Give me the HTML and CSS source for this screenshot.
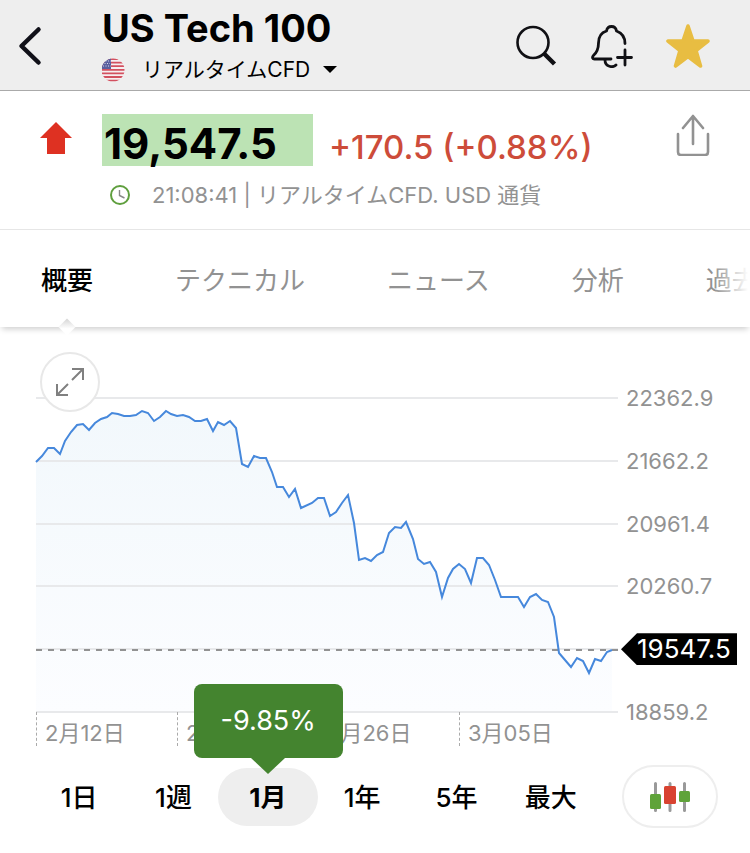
FILE: index.html
```html
<!DOCTYPE html>
<html lang="ja">
<head>
<meta charset="UTF-8">
<meta name="viewport" content="width=device-width, initial-scale=1.0">
<title>US Tech 100</title>
<link rel="stylesheet" href="styles.css">
</head>
<body>
<header class="topbar">
    <button class="icon-btn back" aria-label="戻る">
        <svg width="24" height="40" viewBox="0 0 24 40"><path d="M20.500 3.500 3.500 20 20.500 36.500" fill="none" stroke="#101018" stroke-width="4.500" stroke-linecap="round" stroke-linejoin="round"/></svg>
    </button>
    <div class="heading">
        <h1>US Tech 100</h1>
        <div class="market">
            <svg width="24" height="24" viewBox="0 0 24 24" aria-hidden="true">
                <clipPath id="flag"><circle cx="11" cy="12" r="11.500"/></clipPath>
                <g clip-path="url(#flag)">
                    <path fill="#f6eef0" d="M-1 0h25v24H-1z"/>
                    <path d="M-1 1h25M-1 4.600h25M-1 8.200h25M-1 11.800h25M-1 15.400h25M-1 19h25M-1 22.600h25" stroke="#d2505f" stroke-width="1.800"/>
                    <path fill="#5a5f9e" d="M-1 0h10v11H-1z"/>
                    <path d="M1 3h8M0 5.500h8M1 8h8" stroke="#d5d8ea" stroke-width="1" stroke-dasharray="1 1.500"/>
                </g>
            </svg>
            <select class="market-select" aria-label="市場">
                <option>リアルタイムCFD</option>
            </select>
            <svg width="14" height="8" viewBox="0 0 14 8" aria-hidden="true"><path d="M0 0h14L7 7z"/></svg>
        </div>
    </div>
    <div class="actions">
        <button class="icon-btn" aria-label="検索">
            <svg width="42" height="42" viewBox="0 0 42 42" fill="none" stroke="#101014"><circle cx="17" cy="17.500" r="15.500" stroke-width="2.600"/><path d="m28 28.500 10.500 10.500" stroke-width="4.400"/></svg>
        </button>
        <button class="icon-btn" aria-label="アラートを追加">
            <svg width="42" height="44" viewBox="0 0 42 44" fill="none" stroke="#101014" stroke-width="2.800" stroke-linecap="round" stroke-linejoin="round">
                <path d="M20 35H3.500C1.500 35 1 33.500 2.200 31.800 6 28.500 7.500 25 7.500 19 7.500 12 10.500 8.500 15.500 7 16.500 1 24.500 1 25.500 7 31 9 34 12.500 34 19.500"/>
                <path d="M14 36c0 7 8 8 11 5M34 26v15M26.500 33.500h14"/>
            </svg>
        </button>
        <button class="icon-btn" aria-label="お気に入り">
            <svg width="44" height="46" viewBox="0 0 44 46"><path d="M22 3 27 18H42L30 27.500 34.500 43 22 33.500 9.500 43 14 27.500 2 18H17z" fill="#e8bd42" stroke="#e8bd42" stroke-width="3.600" stroke-linejoin="round"/></svg>
        </button>
    </div>
</header>

<section class="quote">
    <svg class="direction" width="32" height="32" viewBox="0 0 32 32" aria-hidden="true"><path d="M16 0 32 16H25V32H7V16H0z" fill="#de3122"/></svg>
    <div class="quote-body">
        <div class="price-row">
            <strong class="price">19,547.5</strong>
            <span class="change">+170.5 (+0.88%)</span>
        </div>
        <div class="time-row">
            <svg width="20" height="20" viewBox="0 0 20 20" fill="none" aria-hidden="true"><circle cx="10" cy="10" r="9" stroke="#5f9f3e" stroke-width="2"/><path d="M9.500 5v5.500l5 2.500" stroke="#888" stroke-width="1.400"/></svg>
            <span>21:08:41 | リアルタイムCFD. USD 通貨</span>
        </div>
    </div>
    <button class="icon-btn share" aria-label="共有">
        <svg width="34" height="42" viewBox="0 0 34 42" fill="none" stroke="#929292" stroke-width="2.600" stroke-linecap="round" stroke-linejoin="round"><path d="M2 20v18q0 3 3 3h24q3 0 3-3V20M17 30V2M7 14 17 2l10 12"/></svg>
    </button>
</section>

<nav class="tabs">
    <a class="tab active" href="#overview">概要</a>
    <a class="tab" href="#technical">テクニカル</a>
    <a class="tab" href="#news">ニュース</a>
    <a class="tab" href="#analysis">分析</a>
    <a class="tab" href="#history">過去データ</a>
</nav>

<main class="chart" id="overview">
    <div class="plot">
        <svg class="plot-svg" viewBox="0 0 582 314" preserveAspectRatio="none" role="img" aria-label="US Tech 100 1月チャート">
            <defs>
                <linearGradient id="fill" x1="0" y1="0" x2="0" y2="1">
                    <stop offset="0" stop-color="#f2f8fc"/>
                    <stop offset="1" stop-color="#fcfdff"/>
                </linearGradient>
            </defs>
            <path class="area" d=""/>
            <path class="grid-line" d="M0 0H582M0 63H582M0 126H582M0 188H582M0 251H582M0 314H582"/>
            <path class="last-line" d="M0 252H582"/>
            <path class="series" d=""/>
        </svg>
        <div class="dates">
            <span>2月12日</span>
            <span>2月19日</span>
            <span>2月26日</span>
            <span>3月05日</span>
        </div>
    </div>
    <div class="scale">
        <span>22362.9</span>
        <span>21662.2</span>
        <span>20961.4</span>
        <span>20260.7</span>
        <span class="last">19547.5</span>
        <span>18859.2</span>
    </div>
    <button class="expand" aria-label="全画面">
        <svg width="28" height="28" viewBox="0 0 28 28" fill="none" stroke="#808080" stroke-width="2"><path d="M16 1h11v11M27 1 16 12M1 16v11h11M1 27l11-11"/></svg>
    </button>
</main>

<div class="toolbar">
    <div class="ranges">
        <button class="range">1日</button>
        <button class="range">1週</button>
        <button class="range selected">1月<span class="tooltip">-9.85%</span></button>
        <button class="range">1年</button>
        <button class="range">5年</button>
        <button class="range">最大</button>
    </div>
    <button class="chart-type" aria-label="ローソク足">
        <svg width="42" height="30" viewBox="0 0 42 30">
            <path d="M6.500 1.500v27M21 1.500v27M35.500 1.500v27" stroke="#999" stroke-width="3" stroke-linecap="round"/>
            <rect x="1" y="12" width="11" height="15" rx="1.500" fill="#5fa33a"/>
            <rect x="15" y="4" width="12" height="18" rx="1.500" fill="#d84331"/>
            <rect x="30" y="9" width="11" height="11" rx="1.500" fill="#5fa33a"/>
        </svg>
    </button>
</div>

<script src="chart.js"></script>
</body>
</html>
```
FILE: styles.css
```css
* {
    box-sizing: border-box;
}
body {
    margin: 0;
    background: #fff;
    color: #000;
    font-family: Inter, "Noto Sans CJK JP", sans-serif;
    overflow-x: hidden;
}
button {
    padding: 0;
    border: none;
    background: none;
    color: inherit;
    font: inherit;
    cursor: pointer;
}
svg {
    display: block;
    flex: none;
}

/* header */
.topbar {
    display: flex;
    align-items: center;
    height: 91px;
    padding: 2px 40px 0 18px;
    background: #eee;
    border-bottom: 1px solid #aaa;
}
.back {
    width: 84px;
}
.heading {
    flex: 1;
}
h1 {
    margin: 0;
    font-size: 38px;
    line-height: 48px;
    font-weight: 700;
}
.market {
    display: flex;
    align-items: center;
    gap: 12px;
    height: 36px;
}
.market-select {
    appearance: none;
    margin-left: 4px;
    padding: 0;
    border: none;
    background: none;
    color: #000;
    font: inherit;
    font-size: 21px;
    line-height: 32px;
}
.actions {
    display: flex;
    align-items: center;
    gap: 33px;
}

/* price */
.quote {
    display: flex;
    align-items: flex-start;
    padding: 23px 40px 20px;
    border-bottom: 1px solid #e6e6e6;
}
.direction {
    margin: 8px 30px 0 0;
}
.quote-body {
    flex: 1;
}
.price-row {
    display: flex;
    align-items: baseline;
    gap: 16px;
    height: 52px;
}
.price {
    width: 211px;
    height: 52px;
    padding: 4px 0 0 2px;
    background: #bce3b4;
    font-size: 42px;
    line-height: 52px;
    font-weight: 700;
}
.change {
    color: #cd4c3a;
    font-size: 33px;
    line-height: 48px;
    font-weight: 500;
}
.time-row {
    display: flex;
    align-items: center;
    gap: 22px;
    height: 28px;
    margin-top: 15px;
    padding-left: 8px;
    color: #929292;
    font-size: 22px;
    line-height: 28px;
}

/* tabs */
.tabs {
    position: relative;
    z-index: 1;
    display: flex;
    gap: 82px;
    height: 97px;
    padding-left: 41px;
    background: #fff;
    box-shadow: 0 4px 6px -2px rgba(0, 0, 0, 0.2);
    overflow-x: clip;
}
.tabs::after {
    content: "";
    position: absolute;
    inset: 0 0 0 auto;
    width: 36px;
    background: linear-gradient(to right, rgba(255, 255, 255, 0), #fff 95%);
}
.tab {
    position: relative;
    flex: none;
    color: #929292;
    font-size: 26px;
    line-height: 102px;
    text-decoration: none;
}
.tab.active {
    color: #000;
    font-weight: 500;
}
.tab.active::after {
    content: "";
    position: absolute;
    left: 50%;
    top: 91px;
    width: 12px;
    height: 12px;
    margin-left: -6px;
    background: linear-gradient(135deg, #d4d4d4, #fff 60%);
    transform: rotate(45deg);
}

/* chart */
.chart {
    position: relative;
    display: flex;
    padding: 57px 12px 0 36px;
}
.plot {
    flex: 1;
    padding-top: 14px;
}
.plot-svg {
    width: 100%;
    height: 314px;
    overflow: visible;
}
.plot-svg path {
    fill: none;
    vector-effect: non-scaling-stroke;
}
.plot-svg .grid-line {
    stroke: #e8e9eb;
    stroke-width: 2;
}
.plot-svg .area {
    fill: url(#fill);
}
.plot-svg .last-line {
    stroke: #929292;
    stroke-width: 2;
    stroke-dasharray: 6 6;
}
.plot-svg .series {
    stroke: #4688dc;
    stroke-width: 2;
}
.dates {
    display: grid;
    grid-template-columns: repeat(4, 1fr);
    padding-right: 18px;
    color: #929292;
    font-size: 22px;
    line-height: 42px;
}
.dates span {
    height: 34px;
    padding-left: 8px;
    border-left: 1px dashed #aaa;
}
.scale {
    display: flex;
    flex-direction: column;
    justify-content: space-between;
    width: 120px;
    height: 342px;
    padding-left: 8px;
    color: #929292;
    font-size: 22px;
    line-height: 28px;
}
.last {
    width: 116px;
    margin: -2px 0 -2px -5px;
    padding-left: 16px;
    background: #000;
    color: #fff;
    font-size: 26px;
    line-height: 32px;
    clip-path: polygon(0 50%, 16px 0, 100% 0, 100% 100%, 16px 100%);
}
.expand {
    position: absolute;
    left: 40px;
    top: 25px;
    display: grid;
    place-items: center;
    width: 60px;
    height: 60px;
    background: #fff;
    border: 2px solid #e8e8e8;
    border-radius: 50%;
}

/* range buttons */
.toolbar {
    display: flex;
    align-items: center;
    gap: 24px;
    padding: 19px 32px 24px;
}
.ranges {
    flex: 1;
    display: grid;
    grid-template-columns: repeat(6, 1fr);
}
.range {
    height: 58px;
    padding-bottom: 2px;
    font-size: 26px;
    font-weight: 500;
}
.selected {
    position: relative;
    margin: 0 -3px;
    background: #eee;
    border-radius: 29px;
    font-weight: 700;
}
.tooltip {
    position: absolute;
    left: -24px;
    bottom: 68px;
    width: 149px;
    background: #44842f;
    border-radius: 8px;
    color: #fff;
    font-size: 27px;
    line-height: 74px;
    font-weight: 400;
}
.tooltip::after {
    content: "";
    position: absolute;
    left: 50%;
    top: 100%;
    margin-left: -17px;
    border: 17px solid transparent;
    border-top: 16px solid #44842f;
    border-bottom: none;
}
.chart-type {
    display: grid;
    place-items: center;
    width: 96px;
    height: 63px;
    border: 2px solid #eee;
    border-radius: 32px;
}
```
FILE: chart.js
```javascript
const points = [
    [0, 64], [6, 58], [12, 50], [18, 50], [24, 56], [29, 43], [35, 34], [41, 27], [47, 26], [53, 32],
    [59, 25], [65, 21], [71, 19], [76, 15], [82, 16], [88, 18], [94, 18], [100, 17], [106, 13], [112, 15],
    [118, 23], [124, 19], [130, 13], [135, 16], [141, 18], [147, 17], [153, 19], [159, 23], [165, 23], [171, 21],
    [177, 33], [182, 24], [188, 27], [194, 23], [200, 30], [206, 66], [212, 69], [218, 58], [224, 60], [230, 60],
    [236, 74], [241, 89], [247, 89], [253, 99], [259, 91], [265, 110], [276, 105], [282, 100], [288, 100], [294, 118],
    [300, 114], [306, 105], [312, 97], [318, 125], [323, 162], [329, 160], [335, 163], [341, 157], [347, 154], [353, 135],
    [359, 129], [365, 130], [370, 124], [377, 141], [382, 161], [388, 166], [394, 164], [400, 174], [406, 199], [412, 180],
    [417, 171], [423, 166], [429, 171], [435, 185], [441, 160], [447, 160], [453, 167], [459, 182], [465, 199], [482, 199],
    [488, 209], [494, 199], [500, 196], [506, 202], [512, 204], [518, 219], [523, 255], [535, 269], [541, 260], [547, 263],
    [553, 275], [559, 261], [565, 263], [571, 254], [576, 252]
];

const line = 'M' + points.map(p => p.join(' ')).join('L');
document.querySelector('.series').setAttribute('d', line);
document.querySelector('.area').setAttribute('d', line + 'V314H0Z');
```
